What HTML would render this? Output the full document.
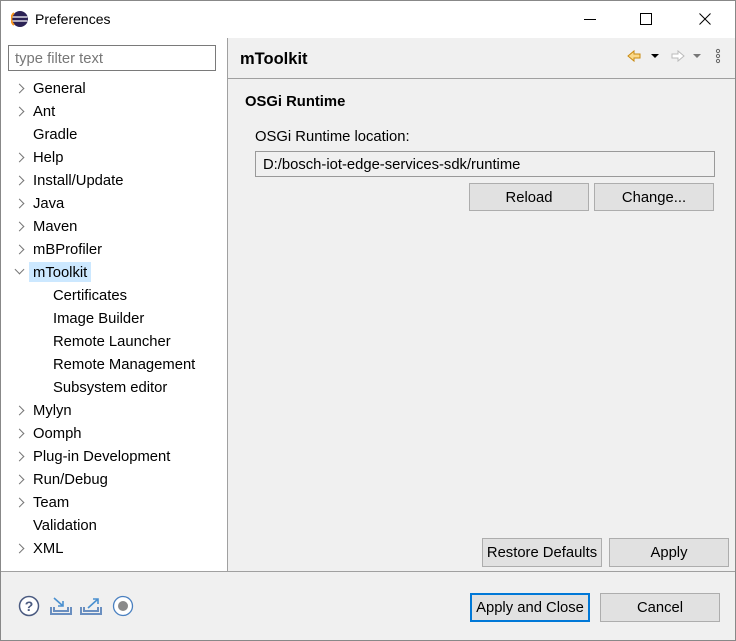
<!DOCTYPE html><html><head><style>
body{margin:0;width:736px;height:641px;overflow:hidden;font-family:"Liberation Sans",sans-serif;font-size:14.8px;color:#000;position:relative;background:#f0f0f0}
.a{position:absolute}
.btn{position:absolute;background:#e1e1e1;border:1px solid #adadad;box-sizing:border-box;text-align:center;font-size:14.8px}
.row{position:absolute;left:33px;height:20px;line-height:22px}
.chev{position:absolute;left:16px;width:6px;height:6px;border-right:1.5px solid #777;border-bottom:1.5px solid #777;transform:rotate(-45deg)}
</style></head><body>
<div class="a" style="left:0;top:0;width:734px;height:639px;border:1px solid #888;"></div>
<div class="a" style="left:1px;top:1px;width:734px;height:37px;background:#fff"></div>
<svg class="a" style="left:11px;top:10px" width="18" height="18"><circle cx="9" cy="9" r="8" fill="#2c2255"/><path d="M1.5 7h15M1.5 11h15" stroke="#fff" stroke-width="1.3"/><path d="M3 3a8 8 0 0 0 0 12" stroke="#f7941e" stroke-width="2" fill="none"/></svg>
<div class="a" style="left:35px;top:11px;font-size:14px">Preferences</div>
<div class="a" style="left:584px;top:19px;width:12px;height:1px;background:#000"></div>
<div class="a" style="left:640px;top:13px;width:10px;height:10px;border:1px solid #000"></div>
<svg class="a" style="left:699px;top:13px" width="12" height="12"><path d="M0.5 0.5l11 11M11.5 0.5l-11 11" stroke="#000" stroke-width="1"/></svg>
<div class="a" style="left:1px;top:38px;width:226px;height:533px;background:#fff"></div>
<div class="a" style="left:227px;top:38px;width:1px;height:533px;background:#a0a0a0"></div>
<div class="a" style="left:8px;top:45px;border:1px solid #7a7a7a;background:#fff;color:#777;line-height:26px;padding-left:6px;box-sizing:border-box;width:208px;height:26px">type filter text</div>
<div class="chev" style="top:85px"></div><div class="row" style="top:78px">General</div>
<div class="chev" style="top:108px"></div><div class="row" style="top:101px">Ant</div>
<div class="row" style="top:124px">Gradle</div>
<div class="chev" style="top:154px"></div><div class="row" style="top:147px">Help</div>
<div class="chev" style="top:177px"></div><div class="row" style="top:170px">Install/Update</div>
<div class="chev" style="top:200px"></div><div class="row" style="top:193px">Java</div>
<div class="chev" style="top:223px"></div><div class="row" style="top:216px">Maven</div>
<div class="chev" style="top:246px"></div><div class="row" style="top:239px">mBProfiler</div>
<div class="chev" style="top:266px;transform:rotate(45deg)"></div><div class="row" style="top:262px;left:29px;padding:0 4px;background:#cce8ff">mToolkit</div>
<div class="row" style="top:285px;left:53px">Certificates</div>
<div class="row" style="top:308px;left:53px">Image Builder</div>
<div class="row" style="top:331px;left:53px">Remote Launcher</div>
<div class="row" style="top:354px;left:53px">Remote Management</div>
<div class="row" style="top:377px;left:53px">Subsystem editor</div>
<div class="chev" style="top:407px"></div><div class="row" style="top:400px">Mylyn</div>
<div class="chev" style="top:430px"></div><div class="row" style="top:423px">Oomph</div>
<div class="chev" style="top:453px"></div><div class="row" style="top:446px">Plug-in Development</div>
<div class="chev" style="top:476px"></div><div class="row" style="top:469px">Run/Debug</div>
<div class="chev" style="top:499px"></div><div class="row" style="top:492px">Team</div>
<div class="row" style="top:515px">Validation</div>
<div class="chev" style="top:545px"></div><div class="row" style="top:538px">XML</div>
<div class="a" style="left:228px;top:78px;width:507px;height:1px;background:#a0a0a0"></div>
<div class="a" style="left:240px;top:50px;font-size:16.5px;font-weight:bold">mToolkit</div>
<svg class="a" style="left:626px;top:48px" width="100" height="18"><path d="M2 8l6-5v3h6v4h-6v3z" fill="#fbd98a" stroke="#c98a10" stroke-width="1"/><path d="M25 6h8l-4 4z" fill="#000"/><path d="M58 8l-6-5v3h-6v4h6v3z" fill="#fff" stroke="#bbb" stroke-width="1"/><path d="M67 6h8l-4 4z" fill="#777"/><circle cx="92" cy="3" r="1.6" fill="none" stroke="#666"/><circle cx="92" cy="8" r="1.6" fill="none" stroke="#666"/><circle cx="92" cy="13" r="1.6" fill="none" stroke="#666"/></svg>
<div class="a" style="left:245px;top:94px;font-weight:bold">OSGi Runtime</div>
<div class="a" style="left:255px;top:129px">OSGi Runtime location:</div>
<div class="a" style="left:255px;top:151px;width:460px;height:26px;border:1px solid #999;box-sizing:border-box;line-height:26px;padding-left:7px">D:/bosch-iot-edge-services-sdk/runtime</div>
<div class="btn" style="left:469px;top:183px;width:120px;height:28px;line-height:28px">Reload</div>
<div class="btn" style="left:594px;top:183px;width:120px;height:28px;line-height:28px">Change...</div>
<div class="btn" style="left:482px;top:538px;width:120px;height:29px;line-height:29px">Restore Defaults</div>
<div class="btn" style="left:609px;top:538px;width:120px;height:29px;line-height:29px">Apply</div>
<div class="a" style="left:1px;top:571px;width:734px;height:1px;background:#a0a0a0"></div>
<svg class="a" style="left:18px;top:595px" width="118" height="24"><circle cx="11" cy="11" r="9.5" fill="#fff" stroke="#4a5a80" stroke-width="1.5"/><text x="11" y="16" font-size="14" font-weight="bold" text-anchor="middle" fill="#4a5a80" font-family="Liberation Sans">?</text><path d="M33 12v7h20v-7M36 12v4h14v-4" fill="none" stroke="#6a8fc0" stroke-width="2"/><path d="M36 3l9 8M45 6v5h-5" fill="none" stroke="#4a90d0" stroke-width="1.6"/><path d="M63 12v7h20v-7M66 12v4h14v-4" fill="none" stroke="#6a8fc0" stroke-width="2"/><path d="M70 13l10-9M75 4h5v5" fill="none" stroke="#4a90d0" stroke-width="1.6"/><circle cx="105" cy="11" r="9.5" fill="#fff" stroke="#4a80c0" stroke-width="1.3"/><circle cx="105" cy="11" r="5" fill="#8a8a8a"/></svg>
<div class="btn" style="left:470px;top:593px;width:120px;height:29px;line-height:27px;border:2px solid #0078d7">Apply and Close</div>
<div class="btn" style="left:600px;top:593px;width:120px;height:29px;line-height:29px">Cancel</div>
</body></html>
